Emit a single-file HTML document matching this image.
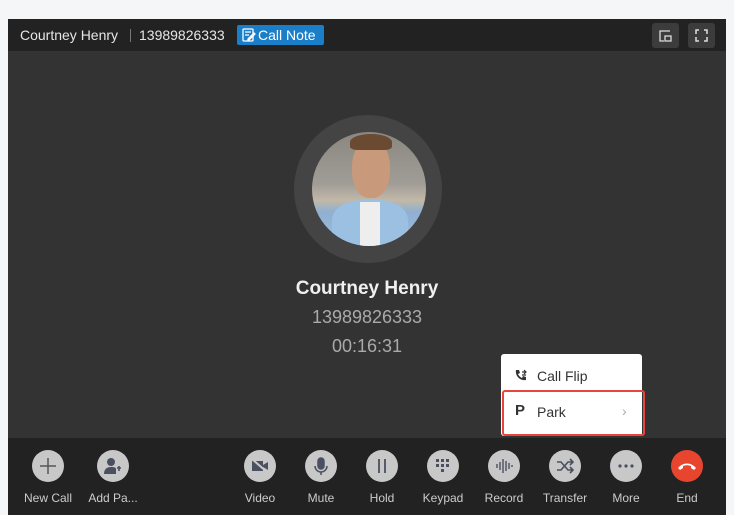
<!DOCTYPE html>
<html><head><style>
*{margin:0;padding:0;box-sizing:border-box}
body{width:734px;height:515px;background:#f5f6f8;font-family:"Liberation Sans",sans-serif;position:relative;overflow:hidden}
.panel{position:absolute;left:8px;top:19px;width:718px;height:496px;background:#333}
.hdr{position:absolute;left:0;top:0;width:718px;height:32px;background:#222;color:#e6e6e6;font-size:14px}
.hdr .t{position:absolute;top:8px}
.note{position:absolute;left:229px;top:6px;width:87px;height:20px;background:#1a7fc8;border-radius:2px;color:#fff;font-size:14px;line-height:20px;padding-left:21px}
.hb{position:absolute;top:4px;width:27px;height:25px;background:#3c3c3c;border-radius:3px}
.bar{position:absolute;left:0;top:419px;width:718px;height:77px;background:#222}
.btn{position:absolute;top:12px;width:80px;margin-left:-40px;text-align:center;color:#ccc;font-size:12px}
.c{width:32px;height:32px;border-radius:50%;background:#c8c8c8;margin:0 auto 9px;display:flex;align-items:center;justify-content:center}
.menu{position:absolute;left:493px;top:335px;width:141px;height:82px;background:#fff;border-radius:3px}
.mi{position:absolute;left:14px;font-size:14px;color:#333}
</style></head><body>
<div class="panel">
 <div class="hdr">
  <span class="t" style="left:12px">Courtney Henry</span>
  <span style="position:absolute;left:122px;top:10px;width:1px;height:13px;background:#777"></span>
  <span class="t" style="left:131px">13989826333</span>
  <div class="note"><svg style="position:absolute;left:5px;top:3px" width="14" height="14" viewBox="0 0 14 14" fill="none" stroke="#fff" stroke-width="1.3"><rect x="1" y="1" width="10" height="12" rx="1"/><path d="M3 4h6M3 7h4M6 11l6-6 1 1-6 6H6z"/></svg>Call Note</div>
  <div class="hb" style="left:644px"><svg width="27" height="25" viewBox="0 0 27 25" fill="none" stroke="#ddd" stroke-width="1.3"><path d="M18 8H8v10h4"/><rect x="13" y="13" width="6" height="5"/></svg></div>
  <div class="hb" style="left:680px"><svg width="27" height="25" viewBox="0 0 27 25" fill="none" stroke="#ddd" stroke-width="1.5"><path d="M8 11V7h3M16 7h3v4M19 14v4h-3M11 18H8v-4"/></svg></div>
 </div>
 <div style="position:absolute;left:286px;top:96px;width:148px;height:148px;border-radius:50%;background:#444"></div>
 <div style="position:absolute;left:304px;top:113px;width:114px;height:114px;border-radius:50%;overflow:hidden;background:linear-gradient(#8a8680 0%,#a09c96 45%,#c2b8a8 60%,#8fb0d0 70%,#9cbfe0 100%)">
  <div style="position:absolute;left:40px;top:8px;width:38px;height:58px;border-radius:45%;background:#c8997a"></div>
  <div style="position:absolute;left:38px;top:2px;width:42px;height:16px;border-radius:50% 50% 20% 20%;background:#6a4a30"></div>
  <div style="position:absolute;left:20px;top:68px;width:76px;height:50px;border-radius:40% 40% 0 0;background:#9cc0e2"></div>
  <div style="position:absolute;left:48px;top:70px;width:20px;height:46px;background:#eee"></div>
 </div>
 <div style="position:absolute;left:0;width:718px;top:259px;text-align:center;color:#f0f0f0;font-size:19px;font-weight:bold">Courtney Henry</div>
 <div style="position:absolute;left:0;width:718px;top:288px;text-align:center;color:#aaa;font-size:18px">13989826333</div>
 <div style="position:absolute;left:0;width:718px;top:317px;text-align:center;color:#aaa;font-size:18px">00:16:31</div>
 <div class="menu">
  <svg style="position:absolute;left:13px;top:15px" width="14" height="14" viewBox="0 0 14 14" fill="#333"><path d="M2 1h3l1 3-2 1c1 2 2 3 4 4l1-2 3 1v3c-6 1-11-4-10-10z"/><path d="M8 3h4M10 1l2 2-2 2M12 6H8" stroke="#333" stroke-width="1.2" fill="none"/></svg>
  <span class="mi" style="left:36px;top:14px">Call Flip</span>
  <span style="position:absolute;left:14px;top:48px;font-weight:bold;font-size:15px;color:#333">P</span>
  <span class="mi" style="left:36px;top:50px">Park</span>
  <span style="position:absolute;left:121px;top:49px;color:#aaa;font-size:14px">›</span>
 </div>
 <div style="position:absolute;left:494px;top:371px;width:143px;height:46px;border:2px solid #e8463c;border-radius:3px"></div>
 <div class="bar">
  <div class="btn" style="left:40px"><div class="c"><svg width="20" height="20"><path d="M10 2v16M2 10h16" stroke="#555" stroke-width="1.5"/></svg></div>New Call</div>
  <div class="btn" style="left:105px"><div class="c"><svg width="18" height="18" fill="#4a5060"><circle cx="7" cy="5" r="4"/><path d="M0 17c0-5 3-7 7-7s5 1 5 2v5z"/><path d="M13 11h4M15 9v5" stroke="#4a5060" stroke-width="1.6"/></svg></div>Add Pa...</div>
  <div class="btn" style="left:252px"><div class="c"><svg width="20" height="16"><rect x="2" y="3" width="11" height="10" fill="#4a5060"/><path d="M13 7l5-3v8l-5-3z" fill="#4a5060"/><path d="M2 1l16 14" stroke="#c8c8c8" stroke-width="2"/></svg></div>Video</div>
  <div class="btn" style="left:313px"><div class="c"><svg width="16" height="18" fill="none" stroke="#4a5060" stroke-width="1.5"><rect x="5" y="1" width="6" height="11" rx="3" fill="#4a5060"/><path d="M2 9a6 6 0 0 0 12 0M8 15v3"/></svg></div>Mute</div>
  <div class="btn" style="left:374px"><div class="c"><svg width="16" height="16"><path d="M5 1v14M11 1v14" stroke="#4a5060" stroke-width="1.8"/></svg></div>Hold</div>
  <div class="btn" style="left:435px"><div class="c"><svg width="16" height="16" fill="#4a5060"><rect x="1" y="1" width="3" height="3"/><rect x="6" y="1" width="3" height="3"/><rect x="11" y="1" width="3" height="3"/><rect x="1" y="6" width="3" height="3"/><rect x="6" y="6" width="3" height="3"/><rect x="11" y="6" width="3" height="3"/><rect x="6" y="11" width="3" height="3"/></svg></div>Keypad</div>
  <div class="btn" style="left:496px"><div class="c"><svg width="18" height="18" stroke="#4a5060" stroke-width="1.4"><path d="M2 7v4M5 5v8M8 2v14M11 4v10M14 6v6M17 8v2"/></svg></div>Record</div>
  <div class="btn" style="left:557px"><div class="c"><svg width="18" height="16" fill="none" stroke="#4a5060" stroke-width="1.6"><path d="M1 4h4l7 8h5M1 12h4l7-8h5M14 1l3 3-3 3M14 9l3 3-3 3"/></svg></div>Transfer</div>
  <div class="btn" style="left:618px"><div class="c"><svg width="16" height="4" fill="#4a5060"><circle cx="2" cy="2" r="1.6"/><circle cx="8" cy="2" r="1.6"/><circle cx="14" cy="2" r="1.6"/></svg></div>More</div>
  <div class="btn" style="left:679px"><div class="c" style="background:#e8452f"><svg width="20" height="10"><path d="M1 7c5-6 13-6 18 0l-2 2-3-2v-2c-3-1-5-1-8 0v2l-3 2z" fill="#fff"/></svg></div>End</div>
 </div>
</div>
</body></html>
